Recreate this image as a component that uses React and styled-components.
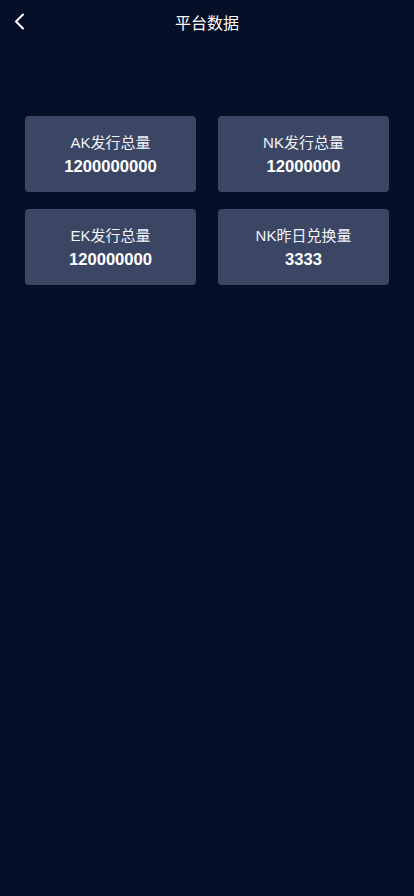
import React from "react";
import styled, { createGlobalStyle } from "styled-components";

const Global = createGlobalStyle`
  html, body { margin: 0; padding: 0; background: #060f28; }
  body { font-family: "Liberation Sans", Arial, "Noto Sans CJK SC", sans-serif; }
`;

const Page = styled.div`
  min-height: 896px;
  background: #060f28;
  color: #fff;
`;

const Header = styled.header`
  position: relative;
  height: 44px;
  display: flex;
  align-items: center;
  justify-content: center;
`;

const Back = styled.button`
  position: absolute;
  left: 12px;
  top: 10px;
  width: 16px;
  height: 24px;
  padding: 0;
  border: 0;
  background: transparent;
  display: flex;
`;

const Title = styled.h1`
  margin: 0;
  font-size: 16px;
  font-weight: 400;
  font-family: "Liberation Sans", "Noto Sans CJK SC", sans-serif;
`;

const Grid = styled.div`
  display: grid;
  grid-template-columns: 171px 171px;
  column-gap: 22px;
  row-gap: 17px;
  padding: 72px 25px 0 25px;
`;

const Card = styled.div`
  height: 76px;
  background: #3b4665;
  border-radius: 4px;
  display: flex;
  flex-direction: column;
  align-items: center;
  justify-content: center;
  gap: 6px;
  padding-top: 2px;
  box-sizing: border-box;
`;

const Label = styled.div`
  font-size: 15px;
  line-height: 18px;
  color: #f2f4f8;
  font-family: "Liberation Sans", "Noto Sans CJK SC", sans-serif;
`;

const Value = styled.div`
  font-size: 16.6px;
  line-height: 18px;
  font-weight: 700;
  color: #fff;
`;

const data = [
  ["AK发行总量", "1200000000"],
  ["NK发行总量", "12000000"],
  ["EK发行总量", "120000000"],
  ["NK昨日兑换量", "3333"],
];

export default function App() {
  return (
    <Page>
      <Global />
      <Header>
        <Back aria-label="back">
          <svg width="16" height="24" viewBox="0 0 16 24" fill="none">
            <path d="M11 4.5 L4 11.5 L11 18.5" stroke="#fff" strokeWidth="2" strokeLinecap="round" strokeLinejoin="round" />
          </svg>
        </Back>
        <Title>平台数据</Title>
      </Header>
      <Grid>
        {data.map(([l, v]) => (
          <Card key={l}>
            <Label>{l}</Label>
            <Value>{v}</Value>
          </Card>
        ))}
      </Grid>
    </Page>
  );
}
